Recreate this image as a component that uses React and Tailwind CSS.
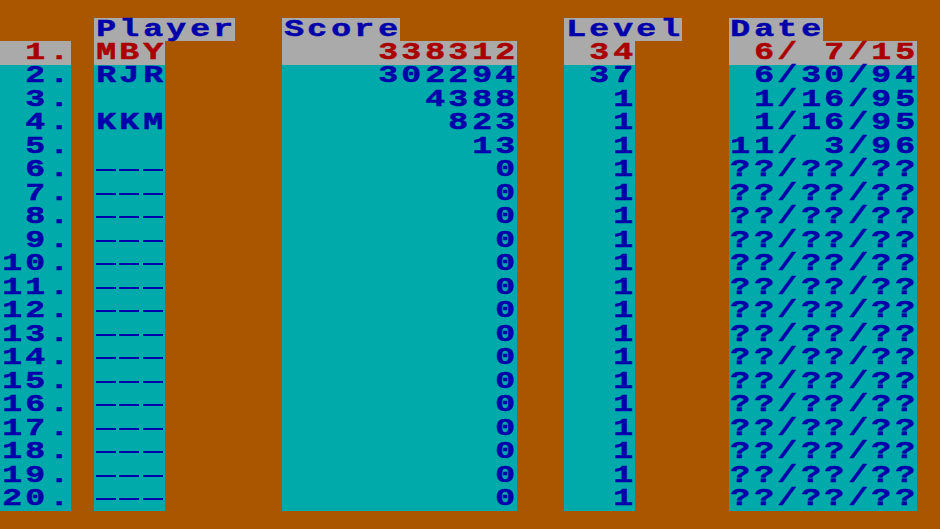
import React from "react";

// EGA text-mode palette
const BG = {
  gray: "bg-[#aaaaaa]",
  cyan: "bg-[#00aaaa]",
};
const FG = {
  blue: "text-[#0000aa]",
  red: "text-[#aa0000]",
};
const DASH = {
  blue: "bg-[#0000aa]",
  red: "bg-[#aa0000]",
};

const players = ["MBY", "RJR", "", "KKM", ""];
const scores = [338312, 302294, 4388, 823, 13];
const levels = [34, 37, 1, 1, 1];
const dates = ["6/ 7/15", "6/30/94", "1/16/95", "1/16/95", "11/ 3/96"];

const pad = (text, width, right) => {
  const t = String(text);
  return right ? t.padStart(width, " ") : t.padEnd(width, " ");
};

function buildRow(segments) {
  const cells = Array.from({ length: 40 }, () => ({ ch: " ", bg: null, fg: null }));
  segments.forEach(({ start, width, text, right, bg, fg }) => {
    const s = pad(text, width, right);
    for (let i = 0; i < width; i++) {
      cells[start + i] = { ch: s[i], bg, fg };
    }
  });
  return cells;
}

function Cell({ ch, bg, fg }) {
  return (
    <div className={`w-[23.5px] h-full flex items-center justify-center shrink-0 ${bg ? BG[bg] : ""} ${fg ? FG[fg] : ""}`}>
      {ch === "-" ? (
        <div className={`w-[20px] h-[2px] ${DASH[fg]}`} />
      ) : ch !== " " ? (
        <span className="inline-block scale-x-[1.38] leading-none [-webkit-text-stroke:0.5px_currentColor]">{ch}</span>
      ) : null}
    </div>
  );
}

function Row({ cells, tall }) {
  return (
    <div className={`flex ${tall ? "h-[23px]" : "h-[23.5px]"}`}>
      {cells.map((c, i) => (
        <Cell key={i} {...c} />
      ))}
    </div>
  );
}

export default function App() {
  const header = buildRow([
    { start: 4, width: 6, text: "Player", bg: "gray", fg: "blue" },
    { start: 12, width: 5, text: "Score", bg: "gray", fg: "blue" },
    { start: 24, width: 5, text: "Level", bg: "gray", fg: "blue" },
    { start: 31, width: 4, text: "Date", bg: "gray", fg: "blue" },
  ]);

  const rows = Array.from({ length: 20 }, (_, i) => {
    const bg = i === 0 ? "gray" : "cyan";
    const fg = i === 0 ? "red" : "blue";
    return buildRow([
      { start: 0, width: 3, text: `${i + 1}.`, right: true, bg, fg },
      { start: 4, width: 3, text: i < 5 ? players[i] : "---", bg, fg },
      { start: 12, width: 10, text: i < 5 ? scores[i] : 0, right: true, bg, fg },
      { start: 24, width: 3, text: i < 5 ? levels[i] : 1, right: true, bg, fg },
      { start: 31, width: 8, text: i < 5 ? dates[i] : "??/??/??", right: true, bg, fg },
    ]);
  });

  return (
    <div className="w-[940px] h-[529px] overflow-hidden bg-[#aa5500] pt-[18px] font-['Liberation_Mono',monospace] font-bold text-[24px]">
      <Row cells={header} tall />
      {rows.map((r, i) => (
        <Row key={i} cells={r} />
      ))}
    </div>
  );
}
